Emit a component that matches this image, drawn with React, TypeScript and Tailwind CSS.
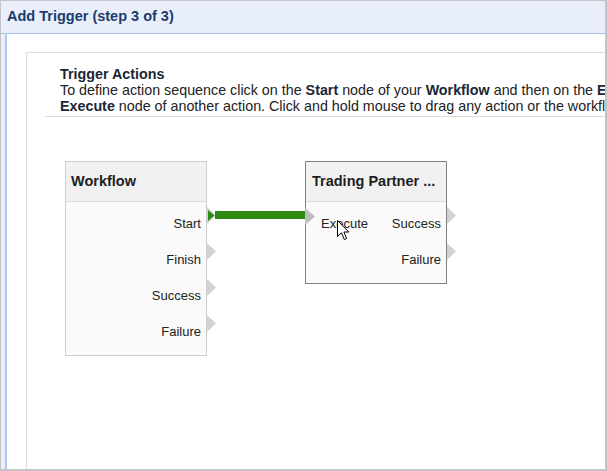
import React from "react";

const font = { fontFamily: '"Liberation Sans", Arial, sans-serif' };

type Port = { label: string };

// gray right-pointing port arrow
function PortArrow({ left, top, green }: { left: number; top: number; green?: boolean }) {
  return (
    <svg
      className="absolute"
      style={{ left, top }}
      width="10"
      height="17"
      viewBox="0 0 10 17"
    >
      <polygon points="0,0 9,8.5 0,17" fill="#d3d3d3" />
      {green && <polygon points="1,3 7.5,8.5 1,14" fill="#2f8a12" />}
    </svg>
  );
}

export default function App() {
  const workflowPorts: Port[] = [
    { label: "Start" },
    { label: "Finish" },
    { label: "Success" },
    { label: "Failure" },
  ];

  return (
    <div
      className="w-[607px] h-[471px] bg-[#e8effa] border border-[#c4c4c4] border-r-2 border-b-2 flex flex-col overflow-hidden"
      style={font}
    >
      {/* Window header */}
      <div className="h-[33px] shrink-0 flex items-center pl-[6px] border-b border-[#a9c1e6]">
        <span className="text-[14.5px] font-bold text-[#1d3b6c]">Add Trigger (step 3 of 3)</span>
      </div>

      {/* Body */}
      <div className="flex-1 ml-[4px] border-l-2 border-[#b4c9ea] bg-white pl-[19px] pt-[18px] flex flex-col min-h-0">
        <div className="flex-1 border-t border-l border-[#dedede] flex flex-col min-h-0">
          {/* Instructions */}
          <div className="ml-[18px] pl-[15px] pt-[13px] pb-[2px] border-b border-[#dcdcdc] text-[14.3px] leading-[16px] text-[#222] whitespace-nowrap overflow-hidden">
            <div className="font-bold text-[#1b2636]">Trigger Actions</div>
            <div>
              To define action sequence click on the <b className="text-[#1b2636]">Start</b> node of your{" "}
              <b className="text-[#1b2636]">Workflow</b> and then on the <b className="text-[#1b2636]">Execute</b> node
              of the first action.
            </div>
            <div>
              <b className="text-[#1b2636]">Execute</b> node of another action. Click and hold mouse to drag any action
              or the workflow node.
            </div>
          </div>

          {/* Diagram canvas */}
          <div className="relative flex-1">
            {/* Workflow node */}
            <div className="absolute left-[38px] top-[44px] w-[142px] h-[195px] border border-[#cfcfcf] bg-[#fafafa]">
              <div className="h-[40px] bg-[#f1f1f1] border-b border-[#dcdcdc] flex items-center pl-[5px] text-[14.5px] font-bold text-[#1e1e1e]">
                Workflow
              </div>
              <div className="pt-[4px] pr-[5px] text-[13px] text-[#222]">
                {workflowPorts.map((p) => (
                  <div key={p.label} className="h-9 flex items-center justify-end">
                    {p.label}
                  </div>
                ))}
              </div>
            </div>

            <PortArrow left={180} top={90} green />
            <PortArrow left={180} top={126} />
            <PortArrow left={180} top={162} />
            <PortArrow left={180} top={198} />

            {/* Connector */}
            <div className="absolute left-[188px] top-[94px] w-[92px] h-[8px] bg-[#2e8a10]" />

            {/* Trading Partner node */}
            <div className="absolute left-[278px] top-[44px] w-[142px] h-[123px] border border-[#808080] bg-[#fafafa]">
              <div className="h-[40px] bg-[#f1f1f1] border-b border-[#dcdcdc] flex items-center pl-[6px] text-[14.5px] font-bold text-[#1e1e1e] whitespace-nowrap">
                Trading Partner ...
              </div>
              <div className="pt-[4px] pl-[15px] pr-[5px] text-[13px] text-[#222]">
                <div className="h-9 flex items-center justify-between">
                  <span>Execute</span>
                  <span>Success</span>
                </div>
                <div className="h-9 flex items-center justify-end">Failure</div>
              </div>
            </div>

            <svg className="absolute left-[278px] top-[91px]" width="11" height="17" viewBox="0 0 11 17">
              <polygon points="0,0 10,8.5 0,17" fill="#bdbdbd" />
            </svg>
            <PortArrow left={420} top={90} />
            <PortArrow left={420} top={126} />

            {/* Mouse cursor */}
            <svg className="absolute left-[310px] top-[103px]" width="13" height="21" viewBox="0 0 13 21">
              <path
                d="M0.5 0.5 L0.5 16.5 L4.5 12.8 L7.3 19.5 L9.6 18.5 L6.9 12 L11.8 12 Z"
                fill="#fff"
                stroke="#000"
                strokeWidth="1"
                strokeLinejoin="miter"
              />
            </svg>
          </div>
        </div>
      </div>
    </div>
  );
}
